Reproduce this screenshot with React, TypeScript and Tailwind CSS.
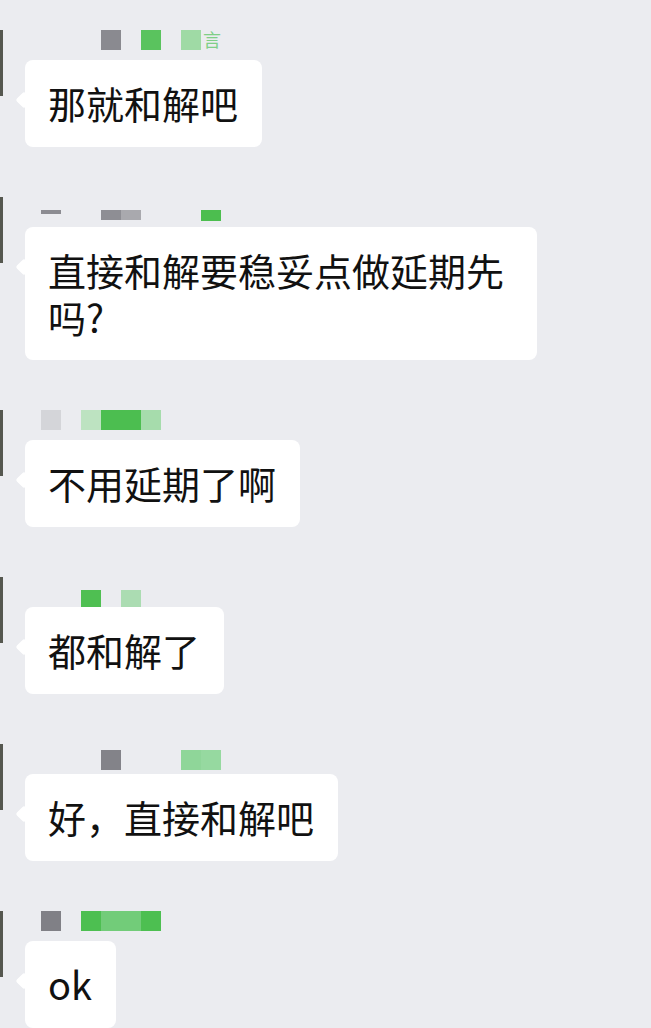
import React from "react";

// a mosaic cell of the pixelated sender name; null = empty cell
type Cell = { c: string; h?: number } | null;

interface Message {
  text: string;
  offset: number; // top padding of the mosaic row
  cells: Cell[]; // 20px cells starting at x = 1
  wide?: boolean;
  tag?: boolean;
}

const messages: Message[] = [
  {
    text: "那就和解吧",
    offset: 0,
    tag: true,
    cells: [null, null, null, null, null, { c: "#8a8a90" }, null, { c: "#5ac35e" }, null, { c: "#9fdaa5" }],
  },
  {
    text: "直接和解要稳妥点做延期先吗?",
    offset: 13,
    wide: true,
    cells: [
      null,
      null,
      { c: "#8c8c92", h: 4 },
      null,
      null,
      { c: "#8e8e94", h: 10 },
      { c: "#a9a9ae", h: 10 },
      null,
      null,
      null,
      { c: "#4cbe4f", h: 11 },
    ],
  },
  {
    text: "不用延期了啊",
    offset: 0,
    cells: [null, null, { c: "#d4d5d9" }, null, { c: "#bde3c1" }, { c: "#4cbe50" }, { c: "#4cbe50" }, { c: "#a6dcac" }],
  },
  {
    text: "都和解了",
    offset: 13,
    cells: [null, null, null, null, { c: "#4fbf52" }, null, { c: "#abdcb2" }],
  },
  {
    text: "好，直接和解吧",
    offset: 6,
    cells: [null, null, null, null, null, { c: "#838389" }, null, null, null, { c: "#8fd699" }, { c: "#96d9a0" }],
  },
  {
    text: "ok",
    offset: 0,
    cells: [null, null, { c: "#808086" }, null, { c: "#4dbf51" }, { c: "#72cc79" }, { c: "#72cc79" }, { c: "#4dbf51" }],
  },
];

function NameMosaic({ m }: { m: Message }) {
  return (
    <div className="flex h-[30px] items-start pl-[1px]" style={{ paddingTop: m.offset }}>
      {m.cells.map((cell, j) => (
        <div
          key={j}
          className="w-[20px] shrink-0"
          style={cell ? { height: cell.h ?? 20, background: cell.c } : { height: 1 }}
        />
      ))}
      {m.tag && (
        <span className="ml-[2px] -mt-[3px] text-[18px] leading-[24px] text-[#7fcf87]">言</span>
      )}
    </div>
  );
}

function Bubble({ text, wide }: { text: string; wide?: boolean }) {
  return (
    <div className="relative ml-[25px] self-start">
      <div className="absolute left-[-7px] top-[34px] h-[12px] w-[12px] rotate-45 rounded-[2px] bg-white" />
      <div
        className={
          "relative rounded-[8px] bg-white pl-[23px] pr-[24px] pt-[19px] pb-[20px] text-[38px] text-[#111]" +
          (wide ? " max-w-[512px] leading-[47px]" : " leading-[48px]")
        }
      >
        {text}
      </div>
    </div>
  );
}

export default function App() {
  return (
    <div
      className="h-[1028px] w-[651px] overflow-hidden bg-[#ebecf0] pt-[30px]"
      style={{ fontFamily: '"Noto Sans CJK SC", "Noto Sans", sans-serif' }}
    >
      <div className="flex flex-col gap-[50px]">
        {messages.map((m, i) => (
          <div key={i} className="flex">
            {/* avatar, mostly cut off at the left edge */}
            <div className="h-[66px] w-[3px] shrink-0 bg-[#55574f]" />
            <div className="-ml-[3px] flex flex-col">
              <NameMosaic m={m} />
              <Bubble text={m.text} wide={m.wide} />
            </div>
          </div>
        ))}
      </div>
    </div>
  );
}
